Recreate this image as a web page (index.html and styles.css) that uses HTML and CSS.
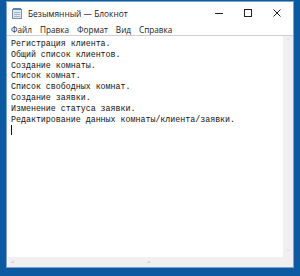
FILE: index.html
```html
<!DOCTYPE html>
<html>
<head>
<meta charset="utf-8">
<link rel="stylesheet" href="styles.css">
</head>
<body>
<div class="desktop">
  <div class="window">
    <div class="titlebar">
      <svg class="appicon" width="10" height="11" viewBox="0 0 10 11">
        <rect x="0.5" y="1.5" width="9" height="9" fill="#dfe9f3" stroke="#7a8ca0"/>
        <rect x="1" y="0" width="8" height="2" fill="#5a83b8"/>
        <line x1="2" y1="4.5" x2="8" y2="4.5" stroke="#9fb2c6"/>
        <line x1="2" y1="6.5" x2="8" y2="6.5" stroke="#9fb2c6"/>
        <line x1="2" y1="8.5" x2="8" y2="8.5" stroke="#9fb2c6"/>
      </svg>
      <span class="title">Безымянный — Блокнот</span>
      <div class="controls">
        <span class="ctl"><svg width="8" height="8" viewBox="0 0 8 8"><line x1="0" y1="4.5" x2="8" y2="4.5" stroke="#222" stroke-width="1"/></svg></span>
        <span class="ctl"><svg width="8" height="8" viewBox="0 0 8 8"><rect x="0.5" y="0.5" width="7" height="7" fill="none" stroke="#222"/></svg></span>
        <span class="ctl"><svg width="8" height="8" viewBox="0 0 8 8"><path d="M0.5 0.5L7.5 7.5M7.5 0.5L0.5 7.5" stroke="#222" stroke-width="1"/></svg></span>
      </div>
    </div>
    <div class="menubar">
      <span>Файл</span><span>Правка</span><span>Формат</span><span>Вид</span><span>Справка</span>
    </div>
    <div class="editor">
      <div class="textarea">
        <div class="text">Регистрация клиента.
Общий список клиентов.
Создание комнаты.
Список комнат.
Список свободных комнат.
Создание заявки.
Изменение статуса заявки.
Редактирование данных комнаты/клиента/заявки.
<span class="caret"></span></div>
        <div class="vscroll">
          <span class="arr">˄</span>
          <span class="arr">˅</span>
        </div>
      </div>
      <div class="hscroll">
        <span class="harr">&lt;</span>
        <span class="harr">&gt;</span>
        <span class="corner"></span>
      </div>
    </div>
  </div>
</div>
</body>
</html>
```
FILE: styles.css
```css
* { box-sizing: border-box; }
html, body { margin: 0; padding: 0; }
body { width: 300px; height: 276px; overflow: hidden; background: #0b5aa2; font-family: "Open Sans", "Noto Sans", sans-serif; }
.desktop { padding: 1px 6px 0 6px; height: 276px; }
.window {
  width: 288px; height: 267px;
  background: #fff;
  border: 1px solid #7aa3cf;
  display: flex; flex-direction: column;
}
.titlebar {
  height: 22px; display: flex; align-items: center;
  padding-left: 5px; font-size: 8.4px; color: #222;
}
.appicon { margin-right: 6px; }
.title { flex: 1; }
.controls { display: flex; height: 100%; padding-right: 2px; }
.ctl { width: 29px; display: flex; align-items: center; justify-content: center; }
.menubar {
  height: 12px; display: flex; align-items: center; gap: 8px;
  font-size: 8.2px; color: #222; padding-left: 4px;
  border-bottom: 1px solid #d0d0d0;
}
.editor { flex: 1; display: flex; flex-direction: column; padding-left: 1px; }
.textarea { flex: 1; display: flex; }
.text {
  flex: 1; white-space: pre; font-family: "Liberation Mono", "DejaVu Sans Mono", monospace;
  font-size: 8.3px; line-height: 10.8px; color: #111; padding: 3px 0 0 3px;
}
.caret { display: inline-block; width: 1px; height: 10px; background: #111; vertical-align: top; }
.vscroll {
  width: 10px; background: #f0f0f0; display: flex; flex-direction: column; justify-content: space-between; align-items: center;
  font-size: 6px; color: #a0a0a0; padding: 1px 0;
}
.hscroll {
  height: 10px; background: #f0f0f0; display: flex; align-items: center; justify-content: space-between;
  font-size: 6px; color: #a0a0a0; padding-left: 3px;
}
.harr:first-child { color: #b388d0; }
.corner { width: 10px; }
```
